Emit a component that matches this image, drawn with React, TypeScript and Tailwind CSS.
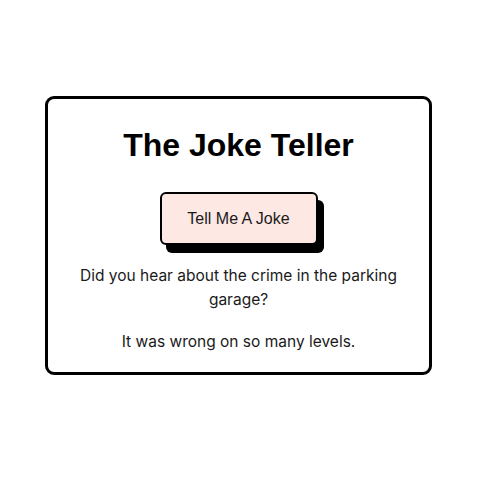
export default function App() {
  return (
    <div className="min-h-[480px] w-[480px] bg-white pt-[96px]">
      <div className="ml-[45px] flex w-[387px] flex-col items-center rounded-[9px] border-[3px] border-black pt-[26px] pb-[18px]">
        <h1
          className="text-[32px] font-bold leading-[40px] text-black"
          style={{ fontFamily: "'Liberation Sans', Arial, sans-serif" }}
        >
          The Joke Teller
        </h1>
        <button
          className="mt-[27px] h-[53px] w-[158px] rounded-[6px] border-2 border-black bg-[#fde8e4] text-[16px] text-[#1a1a1a] shadow-[6px_8px_0_#000]"
          style={{ fontFamily: "'Liberation Sans', Arial, sans-serif" }}
        >
          Tell Me A Joke
        </button>
        <div
          className="mt-[19px] px-[16px] text-center text-[15.5px] leading-[24px] text-[#1a1a1a]"
          style={{ fontFamily: "Inter, sans-serif" }}
        >
          <p>Did you hear about the crime in the parking garage?</p>
          <p className="mt-[18px]">It was wrong on so many levels.</p>
        </div>
      </div>
    </div>
  );
}
